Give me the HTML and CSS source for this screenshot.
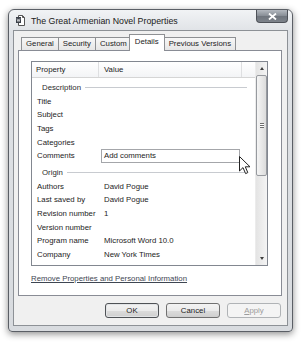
FILE: index.html
```html
<!DOCTYPE html>
<html lang="en">
<head>
    <meta charset="UTF-8">
    <title>The Great Armenian Novel Properties</title>
    <link rel="stylesheet" href="styles.css">
</head>
<body>
    <div class="window">
        <div class="titlebar">
            <svg class="doc-icon" width="9" height="11" viewBox="0 0 9 11">
                <path d="M2.5 0.5 H6.5 L8.5 2.5 V10.5 H2.5 Z" fill="#fff" stroke="#555"/>
                <path d="M6.5 0.5 V2.5 H8.5" fill="none" stroke="#555"/>
                <rect x="0" y="2" width="5" height="6" fill="#3a3f48"/>
                <path d="M1 3.5 L1.8 6.5 L2.5 4.5 L3.2 6.5 L4 3.5" fill="none" stroke="#fff" stroke-width="0.6"/>
            </svg>
            <span class="title">The Great Armenian Novel Properties</span>
            <div class="close">
                <svg width="9" height="7" viewBox="0 0 9 7">
                    <path d="M1 0.5 L8 6.5 M8 0.5 L1 6.5" stroke="#fff" stroke-width="1.8"/>
                </svg>
            </div>
        </div>

        <div class="client">
            <div class="tabs">
                <div class="tab">General</div>
                <div class="tab">Security</div>
                <div class="tab">Custom</div>
                <div class="tab selected">Details</div>
                <div class="tab">Previous Versions</div>
            </div>

            <div class="panel">
                <div class="list">
                    <div class="list-main">
                        <div class="list-head">
                            <div class="hcell prop">Property</div>
                            <div class="hcell val">Value</div>
                            <div class="hcell rest"></div>
                        </div>

                        <div class="group"><span>Description</span></div>
                        <div class="row"><span class="key">Title</span><span class="value"></span></div>
                        <div class="row"><span class="key">Subject</span><span class="value"></span></div>
                        <div class="row"><span class="key">Tags</span><span class="value"></span></div>
                        <div class="row"><span class="key">Categories</span><span class="value"></span></div>
                        <div class="row"><span class="key">Comments</span><span class="value"><span class="edit">Add comments</span></span></div>

                        <div class="group"><span>Origin</span></div>
                        <div class="row"><span class="key">Authors</span><span class="value">David Pogue</span></div>
                        <div class="row"><span class="key">Last saved by</span><span class="value">David Pogue</span></div>
                        <div class="row"><span class="key">Revision number</span><span class="value">1</span></div>
                        <div class="row"><span class="key">Version number</span><span class="value"></span></div>
                        <div class="row"><span class="key">Program name</span><span class="value">Microsoft Word 10.0</span></div>
                        <div class="row"><span class="key">Company</span><span class="value">New York Times</span></div>
                    </div>

                    <div class="scrollbar">
                        <div class="sb-btn"><span class="arrow up"></span></div>
                        <div class="thumb"><span class="grip"></span></div>
                        <div class="track"></div>
                        <div class="sb-btn"><span class="arrow down"></span></div>
                    </div>
                </div>

                <a class="remove-link" href="#">Remove Properties and Personal Information</a>
            </div>

            <div class="buttons">
                <button class="btn default">OK</button>
                <button class="btn">Cancel</button>
                <button class="btn disabled"><u>A</u>pply</button>
            </div>
        </div>
    </div>

    <!-- mouse pointer over the comments box -->
    <svg class="cursor" width="13" height="19" viewBox="0 0 13 19">
        <path d="M0.5 0.5 V15 L4 11.6 L6.6 17.6 L8.8 16.6 L6.3 10.8 H11 Z" fill="#fff" stroke="#222" stroke-width="1"/>
    </svg>
</body>
</html>
```

FILE: styles.css
```css
* {
    margin: 0;
    padding: 0;
    box-sizing: border-box;
}
body {
    font-family: "Liberation Sans", Arial, sans-serif;
    font-size: 7.8px;
    color: #1c1c1c;
    background-color: #fff;
    width: 301px;
    height: 342px;
    padding: 9px 0 0 8px;
    overflow: hidden;
}

/* window frame */
.window {
    width: 285px;
    height: 323px;
    border: 1px solid #5b5f66;
    border-radius: 6px 6px 4px 4px;
    background: linear-gradient(#f1f3f5, #dfe2e6 22px, #d8dbdf);
    box-shadow: 0 2px 7px rgba(0, 0, 0, 0.45);
    display: flex;
    flex-direction: column;
}
.titlebar {
    height: 20px;
    display: flex;
    align-items: center;
    padding-left: 7px;
}
.doc-icon {
    margin-top: 1px;
}
.title {
    font-size: 8.8px;
    color: #202020;
    margin-left: 6px;
    margin-top: 1px;
}
.close {
    align-self: flex-start;
    margin-left: auto;
    margin-right: 4px;
    width: 32px;
    height: 13px;
    border: 1px solid #4d5158;
    border-top: none;
    border-radius: 0 0 4px 4px;
    background: linear-gradient(#b4b9c0, #868c94 50%, #6f757d 51%, #7d838b);
    display: flex;
    justify-content: center;
    align-items: center;
}

/* client area */
.client {
    flex: 1;
    margin: 0 4px 5px 4px;
    border: 1px solid #8d9196;
    background-color: #f0f0f0;
    display: flex;
    flex-direction: column;
}
.tabs {
    height: 19px;
    display: flex;
    align-items: flex-end;
    padding-left: 7px;
}
.tab {
    height: 13px;
    line-height: 12px;
    padding: 0 4px;
    margin-right: -1px;
    border: 1px solid #8e9093;
    border-bottom: none;
    background: linear-gradient(#f7f7f7, #e6e6e6);
}
.tab.selected {
    position: relative;
    z-index: 1;
    height: 17px;
    line-height: 14px;
    margin: 0 -1px -1px -2px;
    padding: 0 5px;
    background: #fff;
}

.panel {
    height: 246px;
    margin: 0 5px 0 4px;
    border: 1px solid #898c95;
    background-color: #fff;
    padding: 10px 0 0 12px;
}

/* details list */
.list {
    width: 237px;
    height: 205px;
    border: 1px solid #828790;
    display: flex;
}
.list-main {
    flex: 1;
    overflow: hidden;
}
.list-head {
    height: 16px;
    display: flex;
    background: linear-gradient(#ffffff, #f3f4f6);
    border-bottom: 1px solid #d5d5d5;
}
.hcell {
    line-height: 15px;
    padding-left: 4px;
    border-right: 1px solid #dedfe1;
}
.hcell.prop {
    width: 67px;
}
.hcell.val {
    width: 143px;
    padding-left: 5px;
}
.hcell.rest {
    flex: 1;
    border-right: none;
}
.group {
    height: 13.67px;
    margin-top: 3px;
    padding: 0 8px 0 10px;
    display: flex;
    align-items: center;
    color: #2a2a2a;
}
.group::after {
    content: "";
    flex: 1;
    height: 1px;
    margin-left: 4px;
    background-color: #c8cbd0;
}
.row {
    height: 13.67px;
    line-height: 13.67px;
    display: flex;
    white-space: nowrap;
}
.key {
    width: 67px;
    padding-left: 5px;
}
.value {
    flex: 1;
    padding-left: 5px;
}
.edit {
    display: block;
    width: 139px;
    height: 14px;
    line-height: 12px;
    margin-left: -3px;
    padding-left: 2px;
    border: 1px solid #a4a6aa;
    background-color: #fff;
}

/* scrollbar */
.scrollbar {
    width: 12px;
    display: flex;
    flex-direction: column;
    background: linear-gradient(90deg, #e4e4e4, #f4f4f4);
    border-left: 1px solid #ececec;
}
.sb-btn {
    height: 13px;
    display: flex;
    justify-content: center;
    align-items: center;
}
.arrow {
    width: 0;
    height: 0;
    border-left: 2.5px solid transparent;
    border-right: 2.5px solid transparent;
}
.arrow.up {
    border-bottom: 3px solid #404040;
}
.arrow.down {
    border-top: 3px solid #404040;
}
.thumb {
    height: 101px;
    border: 1px solid #979a9f;
    border-radius: 2px;
    background: linear-gradient(90deg, #f5f5f5, #dcdcdc);
    display: flex;
    justify-content: center;
    align-items: center;
}
.grip {
    width: 4px;
    height: 5px;
    border-top: 1px solid #6d6d6d;
    border-bottom: 1px solid #6d6d6d;
    background: linear-gradient(#fff 0 1px, #6d6d6d 1px 2px, #fff 2px);
    background-size: 100% 100%;
}
.track {
    flex: 1;
}

.remove-link {
    display: block;
    margin-top: 8px;
    line-height: 10px;
    color: #3e4652;
    text-decoration: underline;
}

/* dialog buttons */
.buttons {
    display: flex;
    justify-content: flex-end;
    gap: 7px;
    margin-top: 7px;
    padding-right: 6px;
}
.btn {
    width: 54px;
    height: 15px;
    font-family: inherit;
    font-size: 7.8px;
    color: #1c1c1c;
    border: 1px solid #707070;
    border-radius: 3px;
    background: linear-gradient(#f3f3f3, #ebebeb 50%, #dcdcdc 51%, #cfcfcf);
}
.btn.default {
    border-color: #4f5256;
    box-shadow: inset 0 0 0 1px #e2e4e6;
}
.btn.disabled {
    color: #9c9c9c;
    border-color: #b0b3b6;
    background: #f4f4f4;
}

.cursor {
    position: absolute;
    left: 239px;
    top: 156px;
}
```
